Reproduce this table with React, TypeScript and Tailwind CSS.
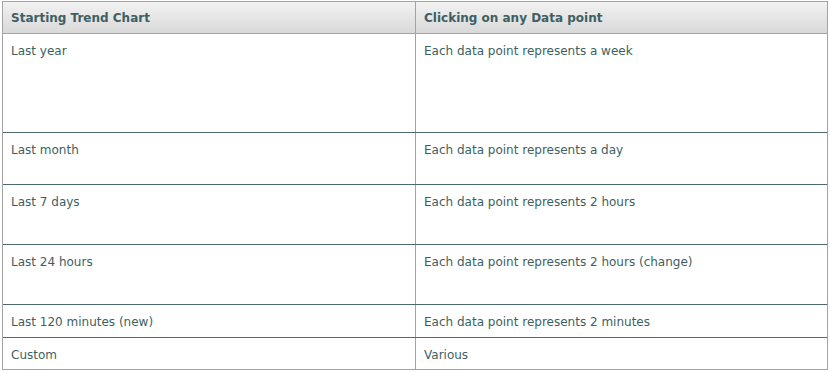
import React from "react";

const rows: { a: string; b: string; h: string; last?: boolean }[] = [
  { a: "Last year", b: "Each data point represents a week", h: "h-[99px]" },
  { a: "Last month", b: "Each data point represents a day", h: "h-[52px]" },
  { a: "Last 7 days", b: "Each data point represents 2 hours", h: "h-[60px]" },
  { a: "Last 24 hours", b: "Each data point represents 2 hours (change)", h: "h-[60px]" },
  { a: "Last 120 minutes (new)", b: "Each data point represents 2 minutes", h: "h-[33px]" },
  { a: "Custom", b: "Various", h: "h-[31px]", last: true },
];

export default function App() {
  return (
    <div className="w-[830px] h-[372px] bg-white pt-[1px] pl-[2px]" style={{ fontFamily: '"DejaVu Sans", Verdana, sans-serif' }}>
      <div className="w-[826px] border border-[#a3a3a3] text-[12px] text-[#3d5f62]">
        <div className="flex h-[32px] bg-gradient-to-b from-[#f2f2f2] to-[#d9d9d9] border-b border-[#a3a3a3] font-bold">
          <div className="w-[413px] border-r border-[#a3a3a3] pl-[8px] pt-[9px] leading-[14px]">Starting Trend Chart</div>
          <div className="flex-1 pl-[8px] pt-[9px] leading-[14px]">Clicking on any Data point</div>
        </div>
        {rows.map((r) => (
          <div key={r.a} className={`flex ${r.h} ${r.last ? "" : "border-b border-[#4a6a6b]"}`}>
            <div className="w-[413px] border-r border-[#a3a3a3] pl-[8px] pt-[10px] leading-[14px]">{r.a}</div>
            <div className="flex-1 pl-[8px] pt-[10px] leading-[14px]">{r.b}</div>
          </div>
        ))}
      </div>
    </div>
  );
}
